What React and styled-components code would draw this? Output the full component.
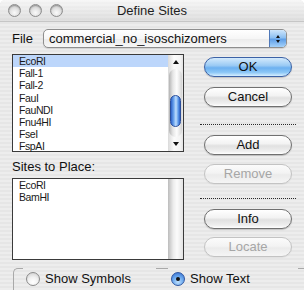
import styled, { createGlobalStyle } from "styled-components";

const GlobalStyle = createGlobalStyle`
  html, body {
    margin: 0;
    padding: 0;
    background: #ffffff;
  }
  body {
    font-family: "Lucida Grande", "Liberation Sans", sans-serif;
  }
`;

const pinstripe = `repeating-linear-gradient(to bottom, #ededed 0px, #ededed 2px, #e6e6e6 2px, #e6e6e6 4px)`;

const Window = styled.div`
  width: 304px;
  height: 290px;
  overflow: hidden;
  display: flex;
  flex-direction: column;
  background: ${pinstripe};
  border-radius: 5px 5px 0 0;
`;

const TitleBar = styled.div`
  height: 22px;
  box-sizing: border-box;
  display: grid;
  grid-template-columns: 1fr auto 1fr;
  align-items: center;
  background: linear-gradient(to bottom, rgba(255, 255, 255, 0.55), rgba(200, 200, 200, 0.35)),
    ${pinstripe};
  border-bottom: 1px solid #c6c6c6;
  border-radius: 5px 5px 0 0;
`;

const Lights = styled.div`
  display: flex;
  gap: 8px;
  padding-left: 8px;
`;

const Light = styled.span`
  width: 13px;
  height: 13px;
  box-sizing: border-box;
  border-radius: 50%;
  border: 1px solid #8c8c8c;
  background: radial-gradient(circle at 50% 70%, #fafafa 0%, #e2e2e2 45%, #b9b9b9 100%);
  box-shadow: inset 0 1px 1px rgba(0, 0, 0, 0.25);
`;

const Title = styled.div`
  font-size: 13px;
  color: #1e1e1e;
`;

const Body = styled.div`
  flex: 1;
  display: flex;
  flex-direction: column;
  padding: 7px 0 0 12px;
`;

const FileRow = styled.div`
  display: flex;
  align-items: center;
  height: 19px;
`;

const FileLabel = styled.span`
  width: 31px;
  font-size: 13px;
  color: #111;
`;

const Popup = styled.div`
  width: 244px;
  height: 19px;
  box-sizing: border-box;
  display: flex;
  align-items: stretch;
  border: 1px solid #8e8e8e;
  border-radius: 5px;
  overflow: hidden;
  background: linear-gradient(to bottom, #ffffff 0%, #f6f6f6 50%, #ebebeb 51%, #f7f7f7 100%);
  box-shadow: 0 1px 1px rgba(0, 0, 0, 0.12);
`;

const PopupText = styled.span`
  flex: 1;
  padding-left: 5px;
  font-size: 13px;
  line-height: 17px;
  color: #111;
`;

const PopupArrows = styled.span`
  width: 16px;
  display: flex;
  flex-direction: column;
  align-items: center;
  justify-content: center;
  gap: 2px;
  border-left: 1px solid #4f78b8;
  background: linear-gradient(to bottom, #cfe6fb 0%, #8dc0f2 45%, #5f9fe8 55%, #a5d2fa 100%);
`;

const Tri = styled.span`
  width: 0;
  height: 0;
  border-left: ${(p) => p.$size}px solid transparent;
  border-right: ${(p) => p.$size}px solid transparent;
  ${(p) => (p.$up ? "border-bottom" : "border-top")}: ${(p) => p.$size + 1}px solid #111;
`;

const Main = styled.div`
  display: grid;
  grid-template-columns: 172px 96px;
  column-gap: 16px;
  margin-top: 6px;
`;

const LeftCol = styled.div`
  display: flex;
  flex-direction: column;
`;

const ListBox = styled.div`
  height: ${(p) => p.$height}px;
  box-sizing: border-box;
  display: flex;
  border: 1px solid #3a3a3a;
  background: #ffffff;
`;

const ListItems = styled.div`
  flex: 1;
  display: flex;
  flex-direction: column;
`;

const Item = styled.div`
  height: ${(p) => p.$row}px;
  line-height: ${(p) => p.$row}px;
  padding-left: 6px;
  font-size: 10.5px;
  letter-spacing: -0.4px;
  color: #1a1a1a;
  background: ${(p) => (p.$selected ? "#bcd6fb" : "transparent")};
`;

const ScrollBar = styled.div`
  width: 15px;
  display: flex;
  flex-direction: column;
  align-items: center;
  background: linear-gradient(90deg, #dadada, #fbfbfb 40%, #f4f4f4 80%, #e4e4e4);
`;

const ArrowCell = styled.div`
  height: 14px;
  display: flex;
  align-items: center;
  justify-content: center;
`;

const Track = styled.div`
  flex: 1;
  width: 13px;
  box-sizing: border-box;
  border-radius: 7px;
  display: flex;
  flex-direction: column;
  align-items: center;
  background: linear-gradient(90deg, #b4b4b4, #e6e6e6 30%, #fdfdfd 60%, #d4d4d4);
`;

const Thumb = styled.div`
  width: 11px;
  height: 32px;
  box-sizing: border-box;
  margin-top: ${(p) => p.$offset}px;
  border-radius: 6px;
  border: 1px solid #2b4f9c;
  background: linear-gradient(90deg, #2e63c8, #6ba4ee 30%, #c0defd 55%, #5d9aea 80%, #2c5fc3);
`;

const EmptyBar = styled.div`
  width: 15px;
  background: linear-gradient(90deg, #bcbcbc, #ececec 35%, #fbfbfb 60%, #e3e3e3);
`;

const SectionLabel = styled.div`
  margin-top: 7px;
  height: 16px;
  line-height: 16px;
  font-size: 13px;
  color: #111;
  margin-bottom: 3px;
`;

const RightCol = styled.div`
  display: flex;
  flex-direction: column;
  padding-top: 3px;
`;

const Button = styled.button`
  width: 88px;
  height: 20px;
  margin: ${(p) => p.$gap || 0}px 0 0 4px;
  padding: 0;
  box-sizing: border-box;
  border-radius: 10px;
  font-family: "Lucida Grande", "Liberation Sans", sans-serif;
  font-size: 13px;
  line-height: 18px;
  color: ${(p) => (p.disabled ? "#a6a6a6" : "#111")};
  border: 1px solid ${(p) => (p.$primary ? "#3c62a6" : p.disabled ? "#c3c3c3" : "#707070")};
  background: ${(p) =>
    p.$primary
      ? "linear-gradient(to bottom, #d4eafc 0%, #9acaf4 42%, #6cb0f0 55%, #8cc7f6 80%, #d6efff 100%)"
      : p.disabled
      ? "linear-gradient(to bottom, #fbfbfb 0%, #f3f3f3 45%, #ebebeb 55%, #f5f5f5 100%)"
      : "linear-gradient(to bottom, #ffffff 0%, #f3f3f3 42%, #e1e1e1 55%, #efefef 85%, #ffffff 100%)"};
  box-shadow: 0 1px 1px rgba(0, 0, 0, ${(p) => (p.disabled ? 0.05 : 0.18)});
`;

const Separator = styled.div`
  margin-top: ${(p) => p.$gap}px;
  border-top: 1px dotted #2a2a2a;
`;

const BottomRow = styled.div`
  display: flex;
  height: 22px;
  margin-top: 8px;
  margin-left: 1px;
`;

const Corner = styled.div`
  width: 9px;
  border-top: 1px solid #a9a9a9;
  border-left: 1px solid #a9a9a9;
  border-top-left-radius: 5px;
`;

const LineBit = styled.div`
  width: ${(p) => (p.$width ? `${p.$width}px` : "auto")};
  flex: ${(p) => (p.$width ? "none" : 1)};
  border-top: 1px solid #a9a9a9;
`;

const RadioItem = styled.label`
  width: ${(p) => p.$width}px;
  display: flex;
  align-items: center;
  gap: 5px;
  height: 17px;
  margin-top: 2px;
  padding-left: 3px;
  box-sizing: border-box;
  font-size: 13px;
  color: #111;
`;

const RadioDot = styled.span`
  width: 14px;
  height: 14px;
  box-sizing: border-box;
  border-radius: 50%;
  display: flex;
  align-items: center;
  justify-content: center;
  border: 1px solid ${(p) => (p.$checked ? "#2f56a0" : "#8a8a8a")};
  background: ${(p) =>
    p.$checked
      ? "radial-gradient(circle at 50% 75%, #bfe0fd 0%, #6aa8ee 50%, #2f67c9 100%)"
      : "radial-gradient(circle at 50% 75%, #ffffff 0%, #f1f1f1 45%, #c9c9c9 100%)"};
  &::after {
    content: "";
    width: 4px;
    height: 4px;
    border-radius: 50%;
    background: #111;
    display: ${(p) => (p.$checked ? "block" : "none")};
  }
`;

const sites = ["EcoRI", "Fall-1", "Fall-2", "FauI", "FauNDI", "Fnu4HI", "FseI", "FspAI"];
const placed = ["EcoRI", "BamHI"];

export default function App() {
  return (
    <>
      <GlobalStyle />
      <Window>
        <TitleBar>
          <Lights>
            <Light />
            <Light />
            <Light />
          </Lights>
          <Title>Define Sites</Title>
          <span />
        </TitleBar>
        <Body>
          <FileRow>
            <FileLabel>File</FileLabel>
            <Popup>
              <PopupText>commercial_no_isoschizomers</PopupText>
              <PopupArrows>
                <Tri $up $size={2} />
                <Tri $size={2} />
              </PopupArrows>
            </Popup>
          </FileRow>
          <Main>
            <LeftCol>
              <ListBox $height={98}>
                <ListItems>
                  {sites.map((s, i) => (
                    <Item key={s} $row={12.2} $selected={i === 0}>
                      {s}
                    </Item>
                  ))}
                </ListItems>
                <ScrollBar>
                  <ArrowCell>
                    <Tri $up $size={3} />
                  </ArrowCell>
                  <Track>
                    <Thumb $offset={26} />
                  </Track>
                  <ArrowCell>
                    <Tri $size={3} />
                  </ArrowCell>
                </ScrollBar>
              </ListBox>
              <SectionLabel>Sites to Place:</SectionLabel>
              <ListBox $height={82}>
                <ListItems>
                  {placed.map((s) => (
                    <Item key={s} $row={12}>
                      {s}
                    </Item>
                  ))}
                </ListItems>
                <EmptyBar />
              </ListBox>
            </LeftCol>
            <RightCol>
              <Button $primary>OK</Button>
              <Button $gap={10}>Cancel</Button>
              <Separator $gap={17} />
              <Button $gap={10}>Add</Button>
              <Button $gap={9} disabled>
                Remove
              </Button>
              <Separator $gap={14} />
              <Button $gap={10}>Info</Button>
              <Button $gap={8} disabled>
                Locate
              </Button>
            </RightCol>
          </Main>
          <BottomRow>
            <Corner />
            <RadioItem $width={133}>
              <RadioDot />
              Show Symbols
            </RadioItem>
            <LineBit $width={12} />
            <RadioItem $width={130}>
              <RadioDot $checked />
              Show Text
            </RadioItem>
            <LineBit />
          </BottomRow>
        </Body>
      </Window>
    </>
  );
}
